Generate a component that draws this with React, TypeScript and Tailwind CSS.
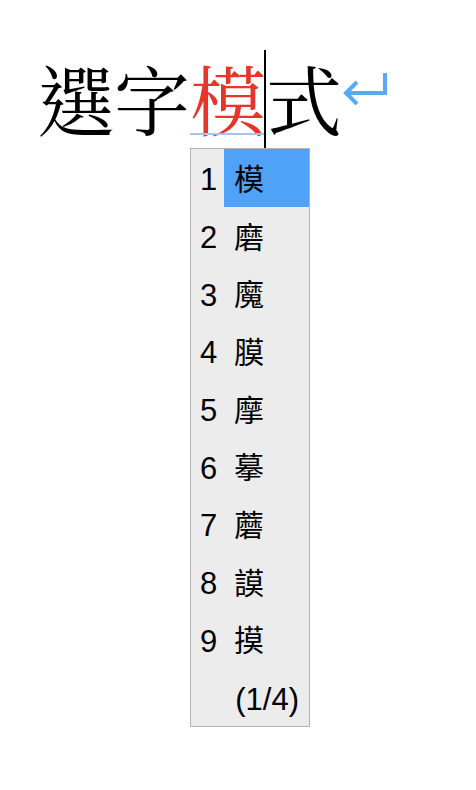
const candidates = ["模", "磨", "魔", "膜", "摩", "摹", "蘑", "謨", "摸"];

function CandidateRow({ n, ch, active }: { n: number; ch: string; active?: boolean }) {
  return (
    <div className="flex h-[57.7px] items-stretch">
      <div className="flex w-[33px] items-center pl-[9px] pt-[4px] text-[31px] leading-none text-black">{n}</div>
      <div
        className={`flex flex-1 items-center pl-[10px] pt-[4px] text-[30px] leading-none text-black ${
          active ? "bg-[#4fa2f7]" : ""
        }`}
      >
        {ch}
      </div>
    </div>
  );
}

export default function App() {
  return (
    <div
      className="h-[790px] w-[476px] bg-white"
      style={{ fontFamily: '"Liberation Sans", "Noto Sans CJK TC", sans-serif' }}
    >
      <div className="flex pl-[38px] pt-[60px]">
        <div
          className="relative flex items-center text-[76px] leading-[76px] text-black"
          style={{ fontFamily: '"Noto Serif CJK TC", "Noto Sans CJK TC", serif' }}
        >
          <span>選字</span>
          <span className="relative text-[#e8352a]">
            模
            <span className="absolute bottom-[1px] left-0 right-[2px] h-[2px] bg-[#a9c3ea]" />
          </span>
          <span className="relative">
            <span className="absolute left-[-2px] top-[-10px] h-[98px] w-[1.5px] bg-black" />
            式
          </span>
          <svg width="48" height="34" viewBox="0 0 48 34" className="ml-[0px] mt-[-20px]">
            <path
              d="M43 2 V22 H5 M15 11 L4 22 L15 33"
              fill="none"
              stroke="#5aa9f5"
              strokeWidth="4"
              strokeLinejoin="miter"
            />
          </svg>
        </div>
      </div>
      <div className="ml-[190px] mt-[12px] w-[120px] border border-[#b4b4b4] bg-[#ececec]">
        {candidates.map((ch, i) => (
          <CandidateRow key={ch} n={i + 1} ch={ch} active={i === 0} />
        ))}
        <div className="flex h-[57.7px] items-center justify-end pr-[10px] pt-[4px] text-[31px] leading-none text-black">
          (1/4)
        </div>
      </div>
    </div>
  );
}
